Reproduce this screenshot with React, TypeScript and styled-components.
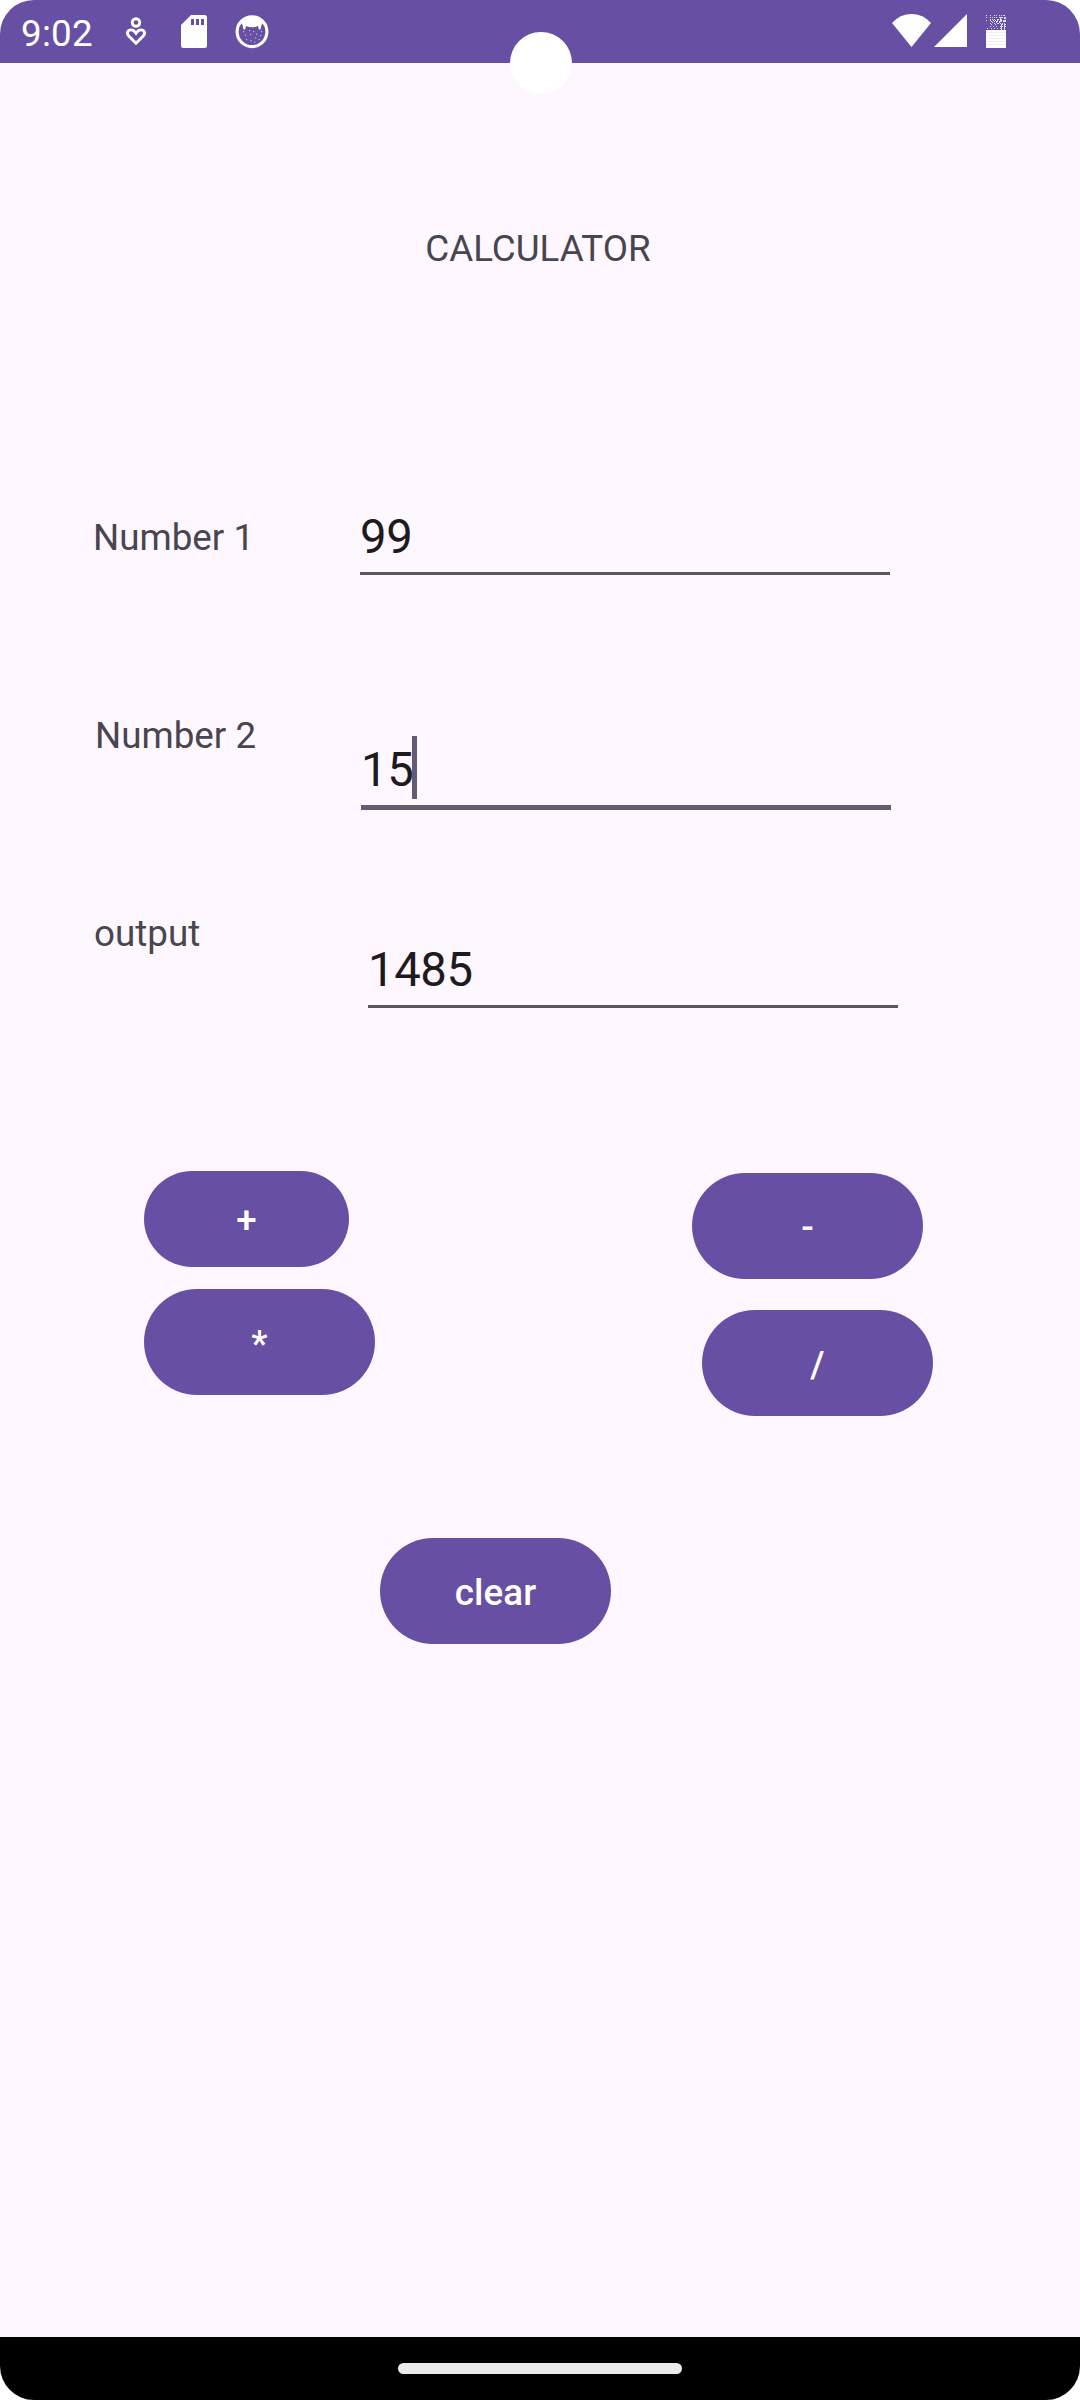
import React from "react";
import styled, { createGlobalStyle } from "styled-components";

const PURPLE = "#6750a4";
const SURFACE = "#fef7ff";

const GlobalStyle = createGlobalStyle`
  *, *::before, *::after { box-sizing: border-box; }
  body { margin: 0; background: #ffffff; font-family: Roboto, "Liberation Sans", sans-serif; }
`;

const Screen = styled.div`
  position: relative;
  display: flex;
  flex-direction: column;
  width: 1080px;
  height: 2400px;
  overflow: hidden;
  border-radius: 34px;
  background: ${SURFACE};
`;

const StatusBar = styled.header`
  display: flex;
  flex: none;
  justify-content: space-between;
  height: 63px;
  padding: 0 74px 0 21px;
  background: ${PURPLE};
  color: #ffffff;
`;

const StatusGroup = styled.div`
  display: flex;
  align-items: flex-start;
`;

const Clock = styled.span`
  width: 104px;
  padding-top: 12px;
  font-size: 36.75px;
  letter-spacing: 0.25px;
  line-height: 44px;
`;

const StatusIcon = styled.svg<{ $gap?: number }>`
  display: block;
  flex: none;
  margin-left: ${({ $gap = 0 }) => $gap}px;
`;

const Camera = styled.div`
  position: absolute;
  top: 31.5px;
  left: 509.5px;
  width: 62px;
  height: 62px;
  border-radius: 50%;
  background: #ffffff;
`;

const Content = styled.main`
  display: flex;
  flex: 1;
  flex-direction: column;
  align-items: flex-start;
`;

const Title = styled.h1`
  align-self: center;
  margin: 164px 0 0;
  padding-right: 4px;
  color: #49454f;
  font-size: 36.75px;
  font-weight: 400;
  line-height: 44px;
`;

const Form = styled.form`
  display: flex;
  flex-direction: column;
  margin-top: 237px;
`;

const FieldRow = styled.div<{ $before?: number; $indent: number }>`
  display: flex;
  align-items: flex-start;
  margin-top: ${({ $before = 0 }) => $before}px;
  padding-left: ${({ $indent }) => $indent}px;
`;

const Label = styled.label<{ $width: number; $drop?: number }>`
  flex: none;
  width: ${({ $width }) => $width}px;
  margin-top: ${({ $drop = 0 }) => $drop}px;
  color: #49454f;
  font-size: 36.75px;
  line-height: 44px;
`;

const Field = styled.div<{ $drop?: number; $focused?: boolean }>`
  width: 530px;
  height: ${({ $focused }) => ($focused ? 68 : 67)}px;
  margin-top: ${({ $drop = 0 }) => $drop}px;
  padding-top: ${({ $focused }) => ($focused ? 0 : 1)}px;
  border-bottom: ${({ $focused }) =>
    $focused ? "5px solid #625b71" : "3px solid #5a5660"};
  color: #1d1b20;
  font-size: 47.25px;
  letter-spacing: -0.4px;
  line-height: 56px;
`;

const Value = styled.span`
  position: relative;
  display: inline-block;
`;

const Caret = styled.span`
  position: absolute;
  top: -6px;
  left: 51px;
  width: 5px;
  height: 63px;
  background: #625b71;
`;

const Keypad = styled.div`
  display: flex;
  justify-content: space-between;
  width: 789px;
  margin: 163px 0 0 144px;
`;

const KeyColumn = styled.div<{ $gap: number; $drop?: number }>`
  display: flex;
  flex-direction: column;
  gap: ${({ $gap }) => $gap}px;
  padding-top: ${({ $drop = 0 }) => $drop}px;
`;

const Key = styled.button<{ $compact?: boolean; $shift?: number }>`
  width: ${({ $compact }) => ($compact ? 205 : 231)}px;
  height: ${({ $compact }) => ($compact ? 96 : 106)}px;
  margin: 0 0 0 ${({ $shift = 0 }) => $shift}px;
  padding: 4px 0 0;
  border: 0;
  border-radius: 53px;
  background: ${PURPLE};
  color: #ffffff;
  font-family: inherit;
  font-size: 36.75px;
  font-weight: 500;
  line-height: 44px;
  letter-spacing: 0.1px;
`;

const ClearKey = styled(Key)`
  margin: 122px 0 0 380px;
`;

const NavigationBar = styled.footer`
  display: flex;
  flex: none;
  justify-content: center;
  height: 63px;
  padding-top: 26px;
  background: #000000;
`;

const HomeHandle = styled.div`
  width: 284px;
  height: 11px;
  border-radius: 6px;
  background: #ebebeb;
`;

const CareIcon = () => (
  <StatusIcon width="22" height="48" viewBox="125 0 22 48" fill="none" stroke="#fff" strokeWidth="2.9">
    <circle cx="136" cy="22.5" r="3.8" />
    <path d="M136 43.3 L129 36.3 C125.8 32.8 128 29.9 131.1 29.9 C133.6 29.9 134.8 31.3 136 33.1 C137.2 31.3 138.4 29.9 140.9 29.9 C144 29.9 146.2 32.8 143 36.3 Z" />
  </StatusIcon>
);

const StorageIcon = () => (
  <StatusIcon $gap={34} width="26" height="48" viewBox="181 0 26 48">
    <path
      fill="#fff"
      fillRule="evenodd"
      d="M191 15H204.5Q207 15 207 17.5V45.5Q207 48 204.5 48H183.5Q181 48 181 45.5V25ZM191 19V25H194V19ZM196 19V25H199V19ZM201 19V25H204V19Z"
    />
  </StatusIcon>
);

const specks = [
  [243, 31], [249, 30], [253, 31], [261, 31],
  [245, 34.5], [250, 34], [256, 33.5], [260, 35],
  [246, 39], [250.5, 40], [255, 37.5], [258.5, 39], [254, 41.5],
];

const CatIcon = () => (
  <StatusIcon $gap={28} width="34" height="49" viewBox="235 0 34 49">
    <circle cx="252" cy="31.7" r="14.9" fill="none" stroke="#fff" strokeWidth="3.1" />
    <path
      fill="#fff"
      d="M240.5 22 L246 17 H258 L263.5 22 L261.5 25 L260.5 29.5 H258.8 L258 26 Q252 28.6 246 26 L245.2 29.5 H243.5 L242.5 25Z"
    />
    {specks.map(([x, y]) => (
      <rect key={`${x}-${y}`} x={x} y={y} width="1.2" height="1.2" fill="#fff" opacity="0.6" />
    ))}
  </StatusIcon>
);

const WifiIcon = () => (
  <StatusIcon width="40" height="48" viewBox="892 0 40 48">
    <path fill="#fff" d="M892 23Q900 14 911.5 14Q923 14 931 23L911.5 47Z" />
  </StatusIcon>
);

const SignalIcon = () => (
  <StatusIcon $gap={2} width="33" height="48" viewBox="934 0 33 48">
    <path fill="#fff" d="M934 47L967 14V47Z" />
  </StatusIcon>
);

const batteryDither = [
  "10001000101001010110",
  "00000000000000000000",
  "10001010101001111011",
  "00000000000000100011",
  "00001010100110110000",
  "10001001010100110111",
  "00000100101101110111",
  "00000010001001000000",
  "00001000100110101010",
  "00000100010000011011",
  "00000000000000010010",
  "00001001001000111011",
  "00000000000000010010",
  "01000100100100110010",
  "00000000000000010010",
];

const BatteryIcon = () => (
  <StatusIcon $gap={19} width="20" height="48" viewBox="986 0 20 48" shapeRendering="crispEdges">
    {batteryDither.flatMap((row, y) =>
      [...row].map((dot, x) =>
        dot === "1" ? <rect key={`${x}-${y}`} x={986 + x} y={15 + y} width="1" height="1" fill="#fff" opacity="0.8" /> : null,
      ),
    )}
    <rect x="986" y="30" width="20" height="18" fill="#fff" />
    {[32, 35, 38, 41, 44].map((y) => (
      <rect key={y} x="986" y={y} width="20" height="1" fill="#f0eff4" />
    ))}
  </StatusIcon>
);

export default function App() {
  return (
    <>
      <GlobalStyle />
      <Screen>
        <StatusBar>
          <StatusGroup>
            <Clock>9:02</Clock>
            <CareIcon />
            <StorageIcon />
            <CatIcon />
          </StatusGroup>
          <StatusGroup>
            <WifiIcon />
            <SignalIcon />
            <BatteryIcon />
          </StatusGroup>
        </StatusBar>
        <Camera />
        <Content>
          <Title>CALCULATOR</Title>
          <Form>
            <FieldRow $indent={93}>
              <Label $width={267} $drop={8}>Number 1</Label>
              <Field>99</Field>
            </FieldRow>
            <FieldRow $before={138} $indent={95}>
              <Label $width={266} $drop={1}>Number 2</Label>
              <Field $drop={29} $focused>
                <Value>
                  15
                  <Caret />
                </Value>
              </Field>
            </FieldRow>
            <FieldRow $before={101} $indent={94}>
              <Label $width={274} $drop={1}>output</Label>
              <Field $drop={30}>1485</Field>
            </FieldRow>
          </Form>
          <Keypad>
            <KeyColumn $gap={22}>
              <Key $compact>+</Key>
              <Key>*</Key>
            </KeyColumn>
            <KeyColumn $gap={31} $drop={2}>
              <Key>-</Key>
              <Key $shift={10}>/</Key>
            </KeyColumn>
          </Keypad>
          <ClearKey>clear</ClearKey>
        </Content>
        <NavigationBar>
          <HomeHandle />
        </NavigationBar>
      </Screen>
    </>
  );
}
